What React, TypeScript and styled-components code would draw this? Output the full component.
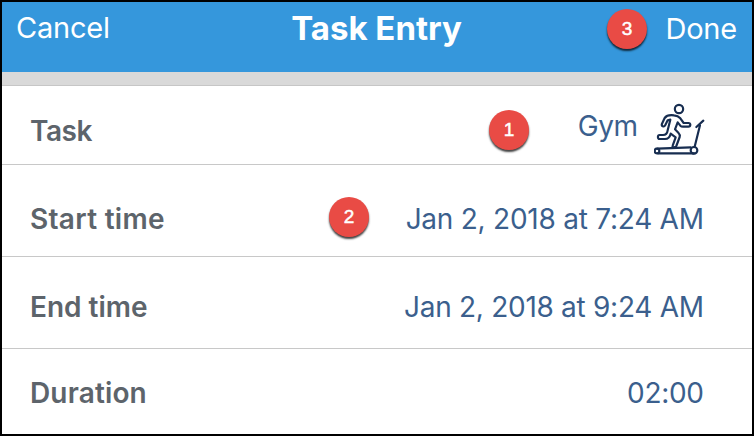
import React from "react";
import styled, { createGlobalStyle } from "styled-components";

const GlobalStyle = createGlobalStyle`
  * { box-sizing: border-box; }
  body { margin: 0; background: #fff; }
`;

const Screen = styled.main`
  width: 754px;
  height: 436px;
  border: 2px solid #000;
  background: #fff;
  display: flex;
  flex-direction: column;
  overflow: hidden;
  font-family: Inter, "Liberation Sans", sans-serif;
  line-height: 34px;
  white-space: nowrap;
`;

const Header = styled.header`
  position: relative;
  height: 70px;
  flex: none;
  padding: 9px 15px 0 14px;
  display: grid;
  grid-template-columns: 1fr auto 1fr;
  align-items: start;
  background: #3597dc;
  color: #fff;
`;

const HeaderButton = styled.button<{ $end?: boolean }>`
  margin: ${(p) => (p.$end ? "1px 0 0" : "0")};
  padding: 0;
  border: 0;
  background: none;
  color: inherit;
  font: 400 29px/34px Inter, sans-serif;
  letter-spacing: -0.2px;
  justify-self: ${(p) => (p.$end ? "end" : "start")};
`;

const Title = styled.h1`
  margin: 0;
  font-size: 33px;
  font-weight: 700;
  line-height: 34px;
`;

const Spacer = styled.div`
  height: 14px;
  flex: none;
  background: #d9d9d9;
  border-bottom: 1px solid #c6c6c6;
`;

const Row = styled.div<{ $height: number; $top: number }>`
  position: relative;
  flex: none;
  height: ${(p) => p.$height}px;
  padding: ${(p) => p.$top}px 48px 0 28px;
  display: flex;
  justify-content: space-between;
  align-items: flex-start;
  border-bottom: 1px solid #c8c8c8;
  &:last-child { border-bottom: 0; }
`;

const Label = styled.span<{ $spacing: number }>`
  color: #5d646b;
  font-size: 28px;
  font-weight: 600;
  letter-spacing: ${(p) => p.$spacing}px;
`;

const Value = styled.span<{ $spacing: number }>`
  color: #3b5f8d;
  font-size: 28px;
  letter-spacing: ${(p) => p.$spacing}px;
  margin-right: ${(p) => -p.$spacing}px;
`;

const TaskValue = styled.div`
  display: flex;
  align-items: flex-start;
  gap: 16px;
  margin-top: -5px;
`;

const Icon = styled.svg`
  width: 51px;
  height: 52px;
  margin-top: -6px;
  margin-right: -1px;
  flex: none;
`;

const Badge = styled.span<{ $left: number; $top: number }>`
  position: absolute;
  left: ${(p) => p.$left}px;
  top: ${(p) => p.$top}px;
  width: 40px;
  height: 40px;
  border-radius: 50%;
  background: #e94b45;
  box-shadow: 0 2px 2px rgba(0, 0, 0, 0.75);
  color: #fff;
  font: 400 19px/40px "Liberation Sans", sans-serif;
  -webkit-text-stroke: 0.5px #fff;
  text-align: center;
`;

const TreadmillIcon = () => (
  <Icon viewBox="42 24 153 156" fill="none" stroke="#172d50" strokeWidth="6.5" strokeLinecap="round" strokeLinejoin="round" aria-label="Treadmill">
    <circle cx="117" cy="42" r="12.5" />
    <path d="M102 61C88 59 79 62 74 69L66 86C63 94 72 98 76 90L83 76L91 74L83 106Q81 120 69 120H59C52 120 52 132 59 132H75C87 132 90 124 92 116L107 127L98 152Q96 157 102 157Q107 157 109 153L119 126Q121 119 115 113L105 103L113 82L121 92Q124 95 129 95H145C153 95 153 84 145 84H131L121 70Q114 62 102 61Z" />
    <circle cx="51" cy="168" r="7" />
    <circle cx="162" cy="166" r="10" />
    <path d="M52 161L152 157M54 175H162M164 155L180 91M169 96L190 77" />
  </Icon>
);

export default function App() {
  return (
    <>
      <GlobalStyle />
      <Screen>
        <Header>
          <HeaderButton>Cancel</HeaderButton>
          <Title>Task Entry</Title>
          <HeaderButton $end>Done</HeaderButton>
          <Badge $left={605} $top={7}>3</Badge>
        </Header>
        <Spacer />
        <Row $height={79} $top={28}>
          <Label $spacing={-0.5}>Task</Label>
          <TaskValue>
            <Value $spacing={-0.5}>Gym</Value>
            <TreadmillIcon />
          </TaskValue>
          <Badge $left={487} $top={24}>1</Badge>
        </Row>
        <Row $height={92} $top={37}>
          <Label $spacing={0.3}>Start time</Label>
          <Value $spacing={-0.24}>Jan 2, 2018 at 7:24 AM</Value>
          <Badge $left={327} $top={32}>2</Badge>
        </Row>
        <Row $height={92} $top={33}>
          <Label $spacing={0}>End time</Label>
          <Value $spacing={-0.28}>Jan 2, 2018 at 9:24 AM</Value>
        </Row>
        <Row $height={85} $top={27}>
          <Label $spacing={0.15}>Duration</Label>
          <Value $spacing={-0.3}>02:00</Value>
        </Row>
      </Screen>
    </>
  );
}
